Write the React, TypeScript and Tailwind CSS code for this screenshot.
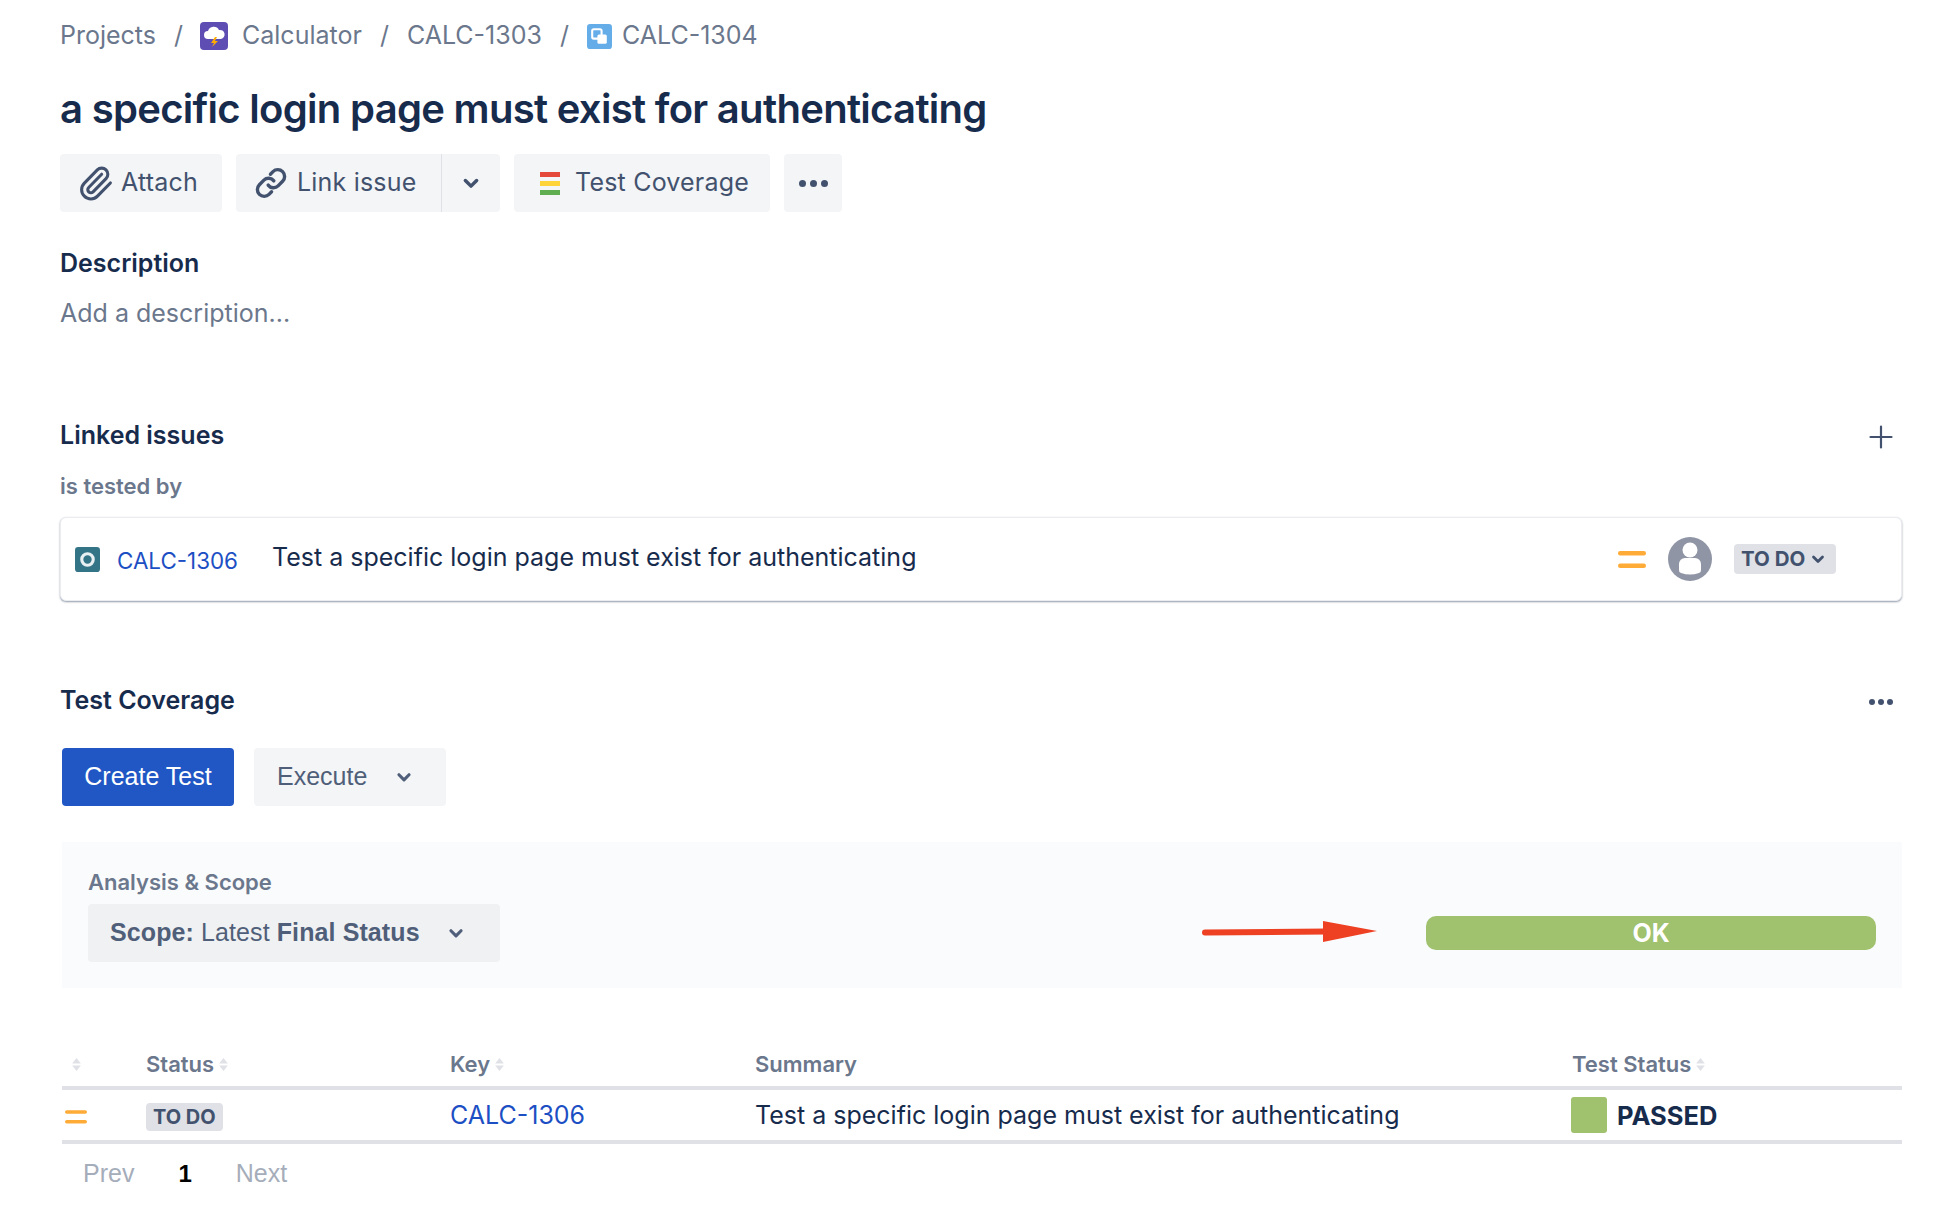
import { Paperclip } from "lucide-react";

const inter = "font-['Inter',sans-serif]";

function Chevron({ className = "" }: { className?: string }) {
  return (
    <svg viewBox="0 0 16 16" className={className} fill="none">
      <path d="M3.5 6 L8 10.5 L12.5 6" stroke="currentColor" strokeWidth="2.8" strokeLinecap="round" strokeLinejoin="round" />
    </svg>
  );
}

function SortIcon() {
  return (
    <svg viewBox="0 0 8 12" className="w-[9px] h-[13px]" fill="#dfe1e6">
      <path d="M4 0 L8 5 L0 5 Z M4 12 L0 7 L8 7 Z" />
    </svg>
  );
}

function Medium({ className }: { className: string }) {
  return (
    <svg viewBox="0 0 28 18" className={className} fill="#ffab38">
      <rect x="0" y="1" width="28" height="4.5" rx="2.2" />
      <rect x="0" y="13.5" width="28" height="4.5" rx="2.2" />
    </svg>
  );
}

export default function App() {
  return (
    <div className={`${inter} w-[1956px] h-[1210px] overflow-hidden bg-white pl-[60px] pr-[54px] text-[#172b4d]`}>
      {/* breadcrumb */}
      <div className="h-[72px] flex items-center text-[25px] text-[#6b778c]">
        <span>Projects</span>
        <span className="ml-[18px] mr-[17px]">/</span>
        <svg viewBox="0 0 28 28" className="w-[28px] h-[28px] mr-[14px]">
          <rect width="28" height="28" rx="4" fill="#5e4db2" />
          <path d="M8 17 a4 4 0 0 1 0-8 a6 6 0 0 1 11-1 a4.5 4.5 0 0 1 2 9 Z" fill="#fff" />
          <path d="M15 15 L11 21 L14 21 L12 25 L18 19 L15 19 L17 15 Z" fill="#ffab00" />
        </svg>
        <span>Calculator</span>
        <span className="mx-[18px]">/</span>
        <span>CALC-1303</span>
        <span className="mx-[18px]">/</span>
        <svg viewBox="0 0 24 24" className="w-[25px] h-[25px] mr-[10px]">
          <rect width="24" height="24" rx="3" fill="#65ade8" />
          <rect x="5" y="5" width="9" height="9" rx="1.5" fill="none" stroke="#fff" strokeWidth="2" />
          <rect x="10" y="10" width="9" height="9" rx="1.5" fill="#fff" />
        </svg>
        <span>CALC-1304</span>
      </div>

      <h1 className="text-[40px] leading-[48px] font-semibold tracking-[-0.7px] mt-[13px]">
        a specific login page must exist for authenticating
      </h1>

      {/* toolbar */}
      <div className="flex items-center gap-[14px] mt-[21px] text-[#42526e] text-[25px] tracking-[0.2px]">
        <button className="h-[58px] w-[162px] bg-[#f4f5f7] rounded-[4px] flex items-center pl-[17px] gap-[7px]">
          <Paperclip size={37} strokeWidth={2} color="#42526e" />
          Attach
        </button>
        <div className="h-[58px] flex bg-[#f4f5f7] rounded-[4px]">
          <button className="w-[205px] flex items-center pl-[18px] gap-[9px]">
            <svg viewBox="0 0 24 24" className="w-[34px] h-[34px]" fill="none" stroke="#42526e" strokeWidth="2.4" strokeLinecap="round" strokeLinejoin="round">
              <path d="M10 13.5 a4.6 4.6 0 0 0 7 .5 l3.2-3.2 a4.8 4.8 0 0 0-6.8-6.8 l-1.8 1.8" />
              <path d="M14 10.5 a4.6 4.6 0 0 0-7-.5 l-3.2 3.2 a4.8 4.8 0 0 0 6.8 6.8 l1.8-1.8" />
            </svg>
            Link issue
          </button>
          <div className="w-[1px] bg-[#dfe1e6]" />
          <button className="w-[58px] flex items-center justify-center">
            <Chevron className="w-[20px] h-[20px]" />
          </button>
        </div>
        <button className="h-[58px] w-[256px] bg-[#f4f5f7] rounded-[4px] flex items-center pl-[26px] gap-[15px]">
          <span className="flex flex-col gap-[4px] w-[20px]">
            <span className="h-[5px] bg-[#e5493a]" />
            <span className="h-[5px] bg-[#ffd43b]" />
            <span className="h-[5px] bg-[#5fae52]" />
          </span>
          Test Coverage
        </button>
        <button className="h-[58px] w-[58px] bg-[#f4f5f7] rounded-[4px] flex items-center justify-center gap-[4px]">
          <span className="w-[7px] h-[7px] rounded-full bg-[#42526e]" />
          <span className="w-[7px] h-[7px] rounded-full bg-[#42526e]" />
          <span className="w-[7px] h-[7px] rounded-full bg-[#42526e]" />
        </button>
      </div>

      <h2 className="text-[25px] leading-[30px] font-semibold mt-[36px]">Description</h2>
      <p className="text-[25px] leading-[30px] text-[#6b778c] mt-[20px]">Add a description...</p>

      {/* linked issues */}
      <div className="flex items-center justify-between mt-[92px] pr-[9px]">
        <h2 className="text-[25px] leading-[30px] font-semibold">Linked issues</h2>
        <svg viewBox="0 0 24 24" className="w-[24px] h-[24px] mt-[3px]" fill="none" stroke="#42526e" strokeWidth="2.2" strokeLinecap="round">
          <path d="M12 1.5 V22.5 M1.5 12 H22.5" />
        </svg>
      </div>
      <p className="text-[22px] leading-[26px] font-semibold text-[#6b778c] mt-[23px]">is tested by</p>
      <div className="h-[84px] mt-[18px] rounded-[6px] bg-white border border-[#ebecf0] shadow-[0_1px_2px_rgba(9,30,66,0.45)] flex items-center pl-[14px]">
        <svg viewBox="0 0 24 24" className="w-[25px] h-[25px]">
          <rect width="24" height="24" rx="3" fill="#347487" />
          <circle cx="12" cy="12" r="5.5" fill="none" stroke="#e9f0f2" strokeWidth="3" />
        </svg>
        <a className="text-[22.4px] text-[#1d4fc4] ml-[17px] mt-[3px]">CALC-1306</a>
        <span className="text-[25px] ml-[34px] -mt-[2px]">Test a specific login page must exist for authenticating</span>
        <div className="ml-auto flex items-center pr-[65px]">
          <Medium className="w-[28px] h-[18px]" />
          <svg viewBox="0 0 44 44" className="w-[44px] h-[44px] ml-[22px]">
            <circle cx="22" cy="22" r="22" fill="#8f95a5" />
            <circle cx="22" cy="13" r="7.5" fill="#fff" />
            <path d="M11 27 a6 6 0 0 1 6-6 h10 a6 6 0 0 1 6 6 v6 a3 3 0 0 1-2 3 q-9 3-18 0 a3 3 0 0 1-2-3 Z" fill="#fff" />
          </svg>
          <span className="ml-[22px] w-[102px] h-[30px] bg-[#dfe1e6] rounded-[4px] flex items-center pl-[7px] gap-[5px] text-[#42526e] text-[20.5px] font-bold">
            TO DO <Chevron className="w-[16px] h-[16px]" />
          </span>
        </div>
      </div>

      {/* test coverage */}
      <div className="flex items-center justify-between mt-[84px] pr-[8px]">
        <h2 className="text-[25px] leading-[30px] font-semibold">Test Coverage</h2>
        <div className="flex gap-[3px] mt-[4px] mr-[1px]">
          <span className="w-[6px] h-[6px] rounded-full bg-[#42526e]" />
          <span className="w-[6px] h-[6px] rounded-full bg-[#42526e]" />
          <span className="w-[6px] h-[6px] rounded-full bg-[#42526e]" />
        </div>
      </div>
      <div className="ml-[2px] flex gap-[20px] mt-[33px] font-['Liberation_Sans',sans-serif] text-[25px]">
        <button className="w-[172px] h-[58px] rounded-[4px] bg-[#2057c4] text-white">Create Test</button>
        <button className="w-[192px] h-[58px] rounded-[4px] bg-[#f4f5f7] text-[#505f79] flex items-center pl-[23px] gap-[28px]">
          Execute <Chevron className="w-[18px] h-[18px]" />
        </button>
      </div>

      <div className="ml-[2px] mt-[36px] h-[146px] bg-[#fafbfc] pl-[26px] pr-[26px]">
        <p className="text-[22px] leading-[26px] font-semibold text-[#6b778c] pt-[27px]">Analysis &amp; Scope</p>
        <div className="flex items-center justify-between mt-[9px]">
          <button className="w-[412px] h-[58px] rounded-[4px] bg-[#f0f1f3] text-[#505f79] font-['Liberation_Sans',sans-serif] text-[25px] tracking-[0.1px] flex items-center pl-[22px]">
            <b>Scope:</b>&nbsp;Latest&nbsp;<b>Final Status</b>
            <Chevron className="w-[18px] h-[18px] ml-[27px]" />
          </button>
          <div className="flex items-center gap-[48px]">
            <svg viewBox="0 0 176 24" className="w-[176px] h-[24px] -mt-[2px]">
              <path d="M3 12.5 L125 11.5" stroke="#ee4023" strokeWidth="6" strokeLinecap="round" fill="none" />
              <path d="M121 1 L175 11 L121 22 Z" fill="#ee4023" />
            </svg>
            <div className="w-[450px] h-[34px] rounded-[10px] bg-[#a0c16e] text-white font-bold text-[25px] leading-[35px] text-center">OK</div>
          </div>
        </div>
      </div>

      {/* table */}
      <div className="ml-[2px] mt-[55px]">
        <div className="grid grid-cols-[84px_304px_305px_817px_1fr] items-center h-[47px] border-b-[4px] border-[#dfe1e6] text-[#6b778c] text-[22px] font-semibold">
          <span className="pl-[10px]"><SortIcon /></span>
          <span className="flex items-center gap-[5px]">Status <SortIcon /></span>
          <span className="flex items-center gap-[5px]">Key <SortIcon /></span>
          <span>Summary</span>
          <span className="flex items-center gap-[5px]">Test Status <SortIcon /></span>
        </div>
        <div className="grid grid-cols-[84px_304px_305px_817px_1fr] items-center h-[54px] border-b-[4px] border-[#dfe1e6]">
          <span className="pl-[3px] flex mt-[2px]"><Medium className="w-[22px] h-[15px]" /></span>
          <span className="flex mt-[3px]"><span className="h-[28px] px-[7px] bg-[#dfe1e6] rounded-[4px] text-[#42526e] text-[20px] leading-[28px] font-bold">TO DO</span></span>
          <a className="text-[25px] text-[#1d4fc4] mt-[1px]">CALC-1306</a>
          <span className="text-[25px] mt-[1px]">Test a specific login page must exist for authenticating</span>
          <span className="flex items-center gap-[10px] -ml-[1px]">
            <span className="w-[36px] h-[36px] rounded-[3px] bg-[#a0c16e]" />
            <b className="text-[25.5px] font-bold mt-[2px]">PASSED</b>
          </span>
        </div>
        <div className="flex items-center h-[59px] pl-[21px] text-[25px] text-[#a5adba] font-['Liberation_Sans',sans-serif]">
          <span>Prev</span>
          <b className="text-black ml-[44px] text-[24px]">1</b>
          <span className="ml-[44px]">Next</span>
        </div>
      </div>
    </div>
  );
}
